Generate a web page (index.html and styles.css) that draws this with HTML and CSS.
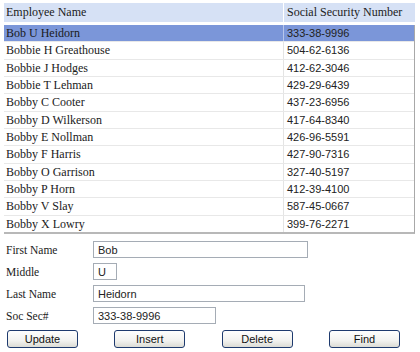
FILE: index.html
```html
<!DOCTYPE html>
<html>
<head>
<meta charset="utf-8">
<link rel="stylesheet" href="styles.css">
</head>
<body>
<div class="grid">
  <div class="row head"><div class="c name">Employee Name</div><div class="c ssn serif">Social Security Number</div></div>
  <div class="rows">
    <div class="row sel"><div class="c name">Bob U Heidorn</div><div class="c ssn">333-38-9996</div></div>
    <div class="row"><div class="c name">Bobbie H Greathouse</div><div class="c ssn">504-62-6136</div></div>
    <div class="row"><div class="c name">Bobbie J Hodges</div><div class="c ssn">412-62-3046</div></div>
    <div class="row"><div class="c name">Bobbie T Lehman</div><div class="c ssn">429-29-6439</div></div>
    <div class="row"><div class="c name">Bobby C Cooter</div><div class="c ssn">437-23-6956</div></div>
    <div class="row"><div class="c name">Bobby D Wilkerson</div><div class="c ssn">417-64-8340</div></div>
    <div class="row"><div class="c name">Bobby E Nollman</div><div class="c ssn">426-96-5591</div></div>
    <div class="row"><div class="c name">Bobby F Harris</div><div class="c ssn">427-90-7316</div></div>
    <div class="row"><div class="c name">Bobby O Garrison</div><div class="c ssn">327-40-5197</div></div>
    <div class="row"><div class="c name">Bobby P Horn</div><div class="c ssn">412-39-4100</div></div>
    <div class="row"><div class="c name">Bobby V Slay</div><div class="c ssn">587-45-0667</div></div>
    <div class="row"><div class="c name">Bobby X Lowry</div><div class="c ssn">399-76-2271</div></div>
  </div>
</div>
<form class="form">
  <div class="frow"><label>First Name</label><input class="in w-first" value="Bob"></div>
  <div class="frow"><label>Middle</label><input class="in w-mid" value="U"></div>
  <div class="frow"><label>Last Name</label><input class="in w-last" value="Heidorn"></div>
  <div class="frow"><label>Soc Sec#</label><input class="in w-ssn" value="333-38-9996"></div>
  <div class="buttons">
    <button type="button" class="btn">Update</button>
    <button type="button" class="btn">Insert</button>
    <button type="button" class="btn">Delete</button>
    <button type="button" class="btn">Find</button>
  </div>
</form>
</body>
</html>
```
FILE: styles.css
```css
html, body { margin: 0; padding: 0; background: #fff; }
body { font-family: "Liberation Serif", "Times New Roman", serif; font-size: 12px; color: #1a1a1a; }
.grid { margin: 3px 0 0 4px; width: 411px; }
.row { display: flex; }
.head { height: 19px; background: #d6e1f5; margin-bottom: 3px; }
.head .c { line-height: 19px; }
.rows { border-right: 1px solid #a8a8a8; border-bottom: 2px solid #b8b8b8; }
.rows .row { height: 16.33px; border-bottom: 1px solid #e8e8e8; }
.rows .row:last-child { border-bottom: none; }
.rows .c { line-height: 17px; }
.c { padding-left: 2px; white-space: nowrap; overflow: hidden; }
.name { width: 277px; }
.ssn { flex: 1; border-left: 1px solid #e4e4e4; font-family: "Liberation Sans", Arial, sans-serif; font-size: 11px; color: #222; padding-left: 3px; }
.head .ssn { border-left: 1px solid #fff; }
.ssn.serif { font-family: "Liberation Serif", "Times New Roman", serif; font-size: 12px; }
.sel { background: #7b96d9; }
.sel .ssn { border-left-color: #b7c6ec; }
.form { margin: 5px 0 0 6px; }
.frow { display: flex; align-items: center; height: 22px; font-size: 11.5px; }
.frow label { width: 87px; }
.in { box-sizing: border-box; height: 17px; border: 1px solid #a5acb5; padding: 0 0 0 4px; font-family: "Liberation Sans", Arial, sans-serif; font-size: 11px; color: #222; margin: 0; }
.w-first { width: 215px; }
.w-mid { width: 24px; }
.w-last { width: 212px; }
.w-ssn { width: 123px; }
.buttons { display: flex; gap: 36.33px; margin: 3px 0 0 1px; }
.btn { box-sizing: border-box; width: 71px; height: 18px; border: 1px solid #1e3a6e; border-radius: 3px; background: linear-gradient(#fefefe, #f2f2ef 60%, #dcdcd5); font-family: "Liberation Sans", Arial, sans-serif; font-size: 11px; color: #111; padding: 0; margin: 0; }
```
